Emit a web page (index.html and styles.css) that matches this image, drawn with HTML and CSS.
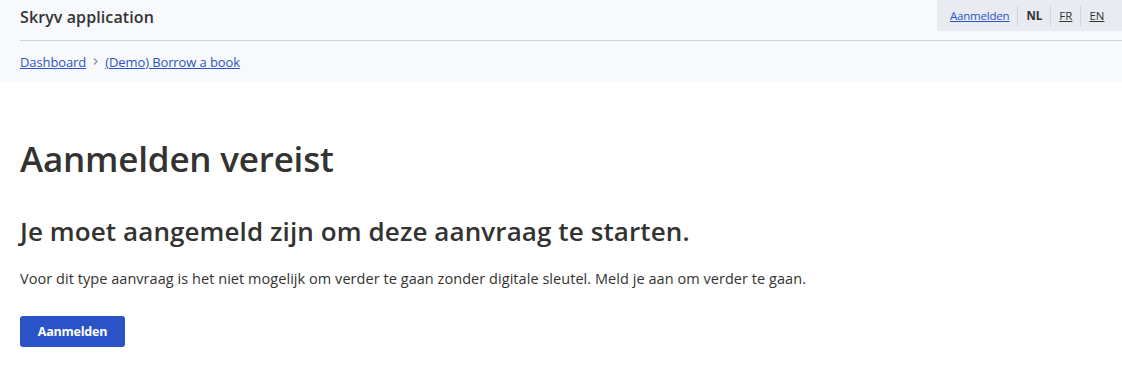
FILE: index.html
```html
<!DOCTYPE html>
<html lang="nl">
<head>
<meta charset="utf-8">
<title>Skryv application</title>
<link rel="stylesheet" href="styles.css">
</head>
<body>
<header class="site-header">
  <div class="topbar">
    <div class="app-title">Skryv application</div>
    <nav class="lang-box">
      <a class="login-link" href="#">Aanmelden</a>
      <span class="sep"></span>
      <span class="lang current">NL</span>
      <span class="sep"></span>
      <a class="lang" href="#">FR</a>
      <span class="sep"></span>
      <a class="lang" href="#">EN</a>
    </nav>
  </div>
  <div class="divider"></div>
  <nav class="breadcrumb">
    <a href="#">Dashboard</a>
    <span class="chev"><svg width="7" height="9" viewBox="0 0 7 9"><path d="M2 1.5 L5 4.5 L2 7.5" fill="none" stroke="#8a9099" stroke-width="1.2"/></svg></span>
    <a href="#">(Demo) Borrow a book</a>
  </nav>
</header>
<main class="content">
  <h1 class="title">Aanmelden vereist</h1>
  <h2 class="subtitle">Je moet aangemeld zijn om deze aanvraag te starten.</h2>
  <p class="text">Voor dit type aanvraag is het niet mogelijk om verder te gaan zonder digitale sleutel. Meld je aan om verder te gaan.</p>
  <button class="btn">Aanmelden</button>
</main>
</body>
</html>
```
FILE: styles.css
```css
* { box-sizing: border-box; }
html, body { margin: 0; padding: 0; }
body {
  font-family: "Open Sans", "Noto Sans", sans-serif;
  color: #333332;
  background: #fff;
}
a { color: #2d54c5; }
.site-header {
  background: #f7f9fc;
  padding-left: 20px;
  height: 82px;
}
.topbar {
  display: flex;
  justify-content: space-between;
  align-items: flex-start;
  height: 40px;
}
.app-title {
  font-size: 16px;
  font-weight: 600;
  padding-top: 6px;
  letter-spacing: 0.1px;
}
.lang-box {
  background: #e8ebf2;
  height: 31px;
  width: 185px;
  display: flex;
  align-items: center;
  padding-left: 13px;
  font-size: 11.5px;
}
.login-link { letter-spacing: -0.2px; }
.sep {
  width: 1px;
  height: 20px;
  background: #cfd4dc;
  margin: 0 8px 0 8px;
}
.lang { color: #333332; }
.lang.current { font-weight: 700; }
.divider {
  height: 1px;
  background: #cdd1d6;
}
.breadcrumb {
  display: flex;
  align-items: center;
  height: 41px;
  font-size: 13px;
  letter-spacing: -0.1px;
}
.chev { display: inline-flex; margin: 0 6px 0 6px; }
.content { padding: 52px 20px 0 20px; }
.title {
  margin: 0;
  font-size: 35px;
  font-weight: 600;
  letter-spacing: -0.2px;
  line-height: 50px;
}
.subtitle {
  margin: 30px 0 0 0;
  font-size: 26px;
  font-weight: 600;
  letter-spacing: 0.1px;
  line-height: 34px;
}
.text {
  margin: 21px 0 0 0;
  font-size: 14.5px;
  letter-spacing: 0.05px;
  line-height: 20px;
}
.btn {
  margin-top: 27px;
  background: #2b53c8;
  color: #fff;
  border: 0;
  border-radius: 3px;
  width: 105px;
  height: 31px;
  font-family: inherit;
  font-size: 12.5px;
  font-weight: 700;
  letter-spacing: -0.2px;
  cursor: pointer;
}
```
